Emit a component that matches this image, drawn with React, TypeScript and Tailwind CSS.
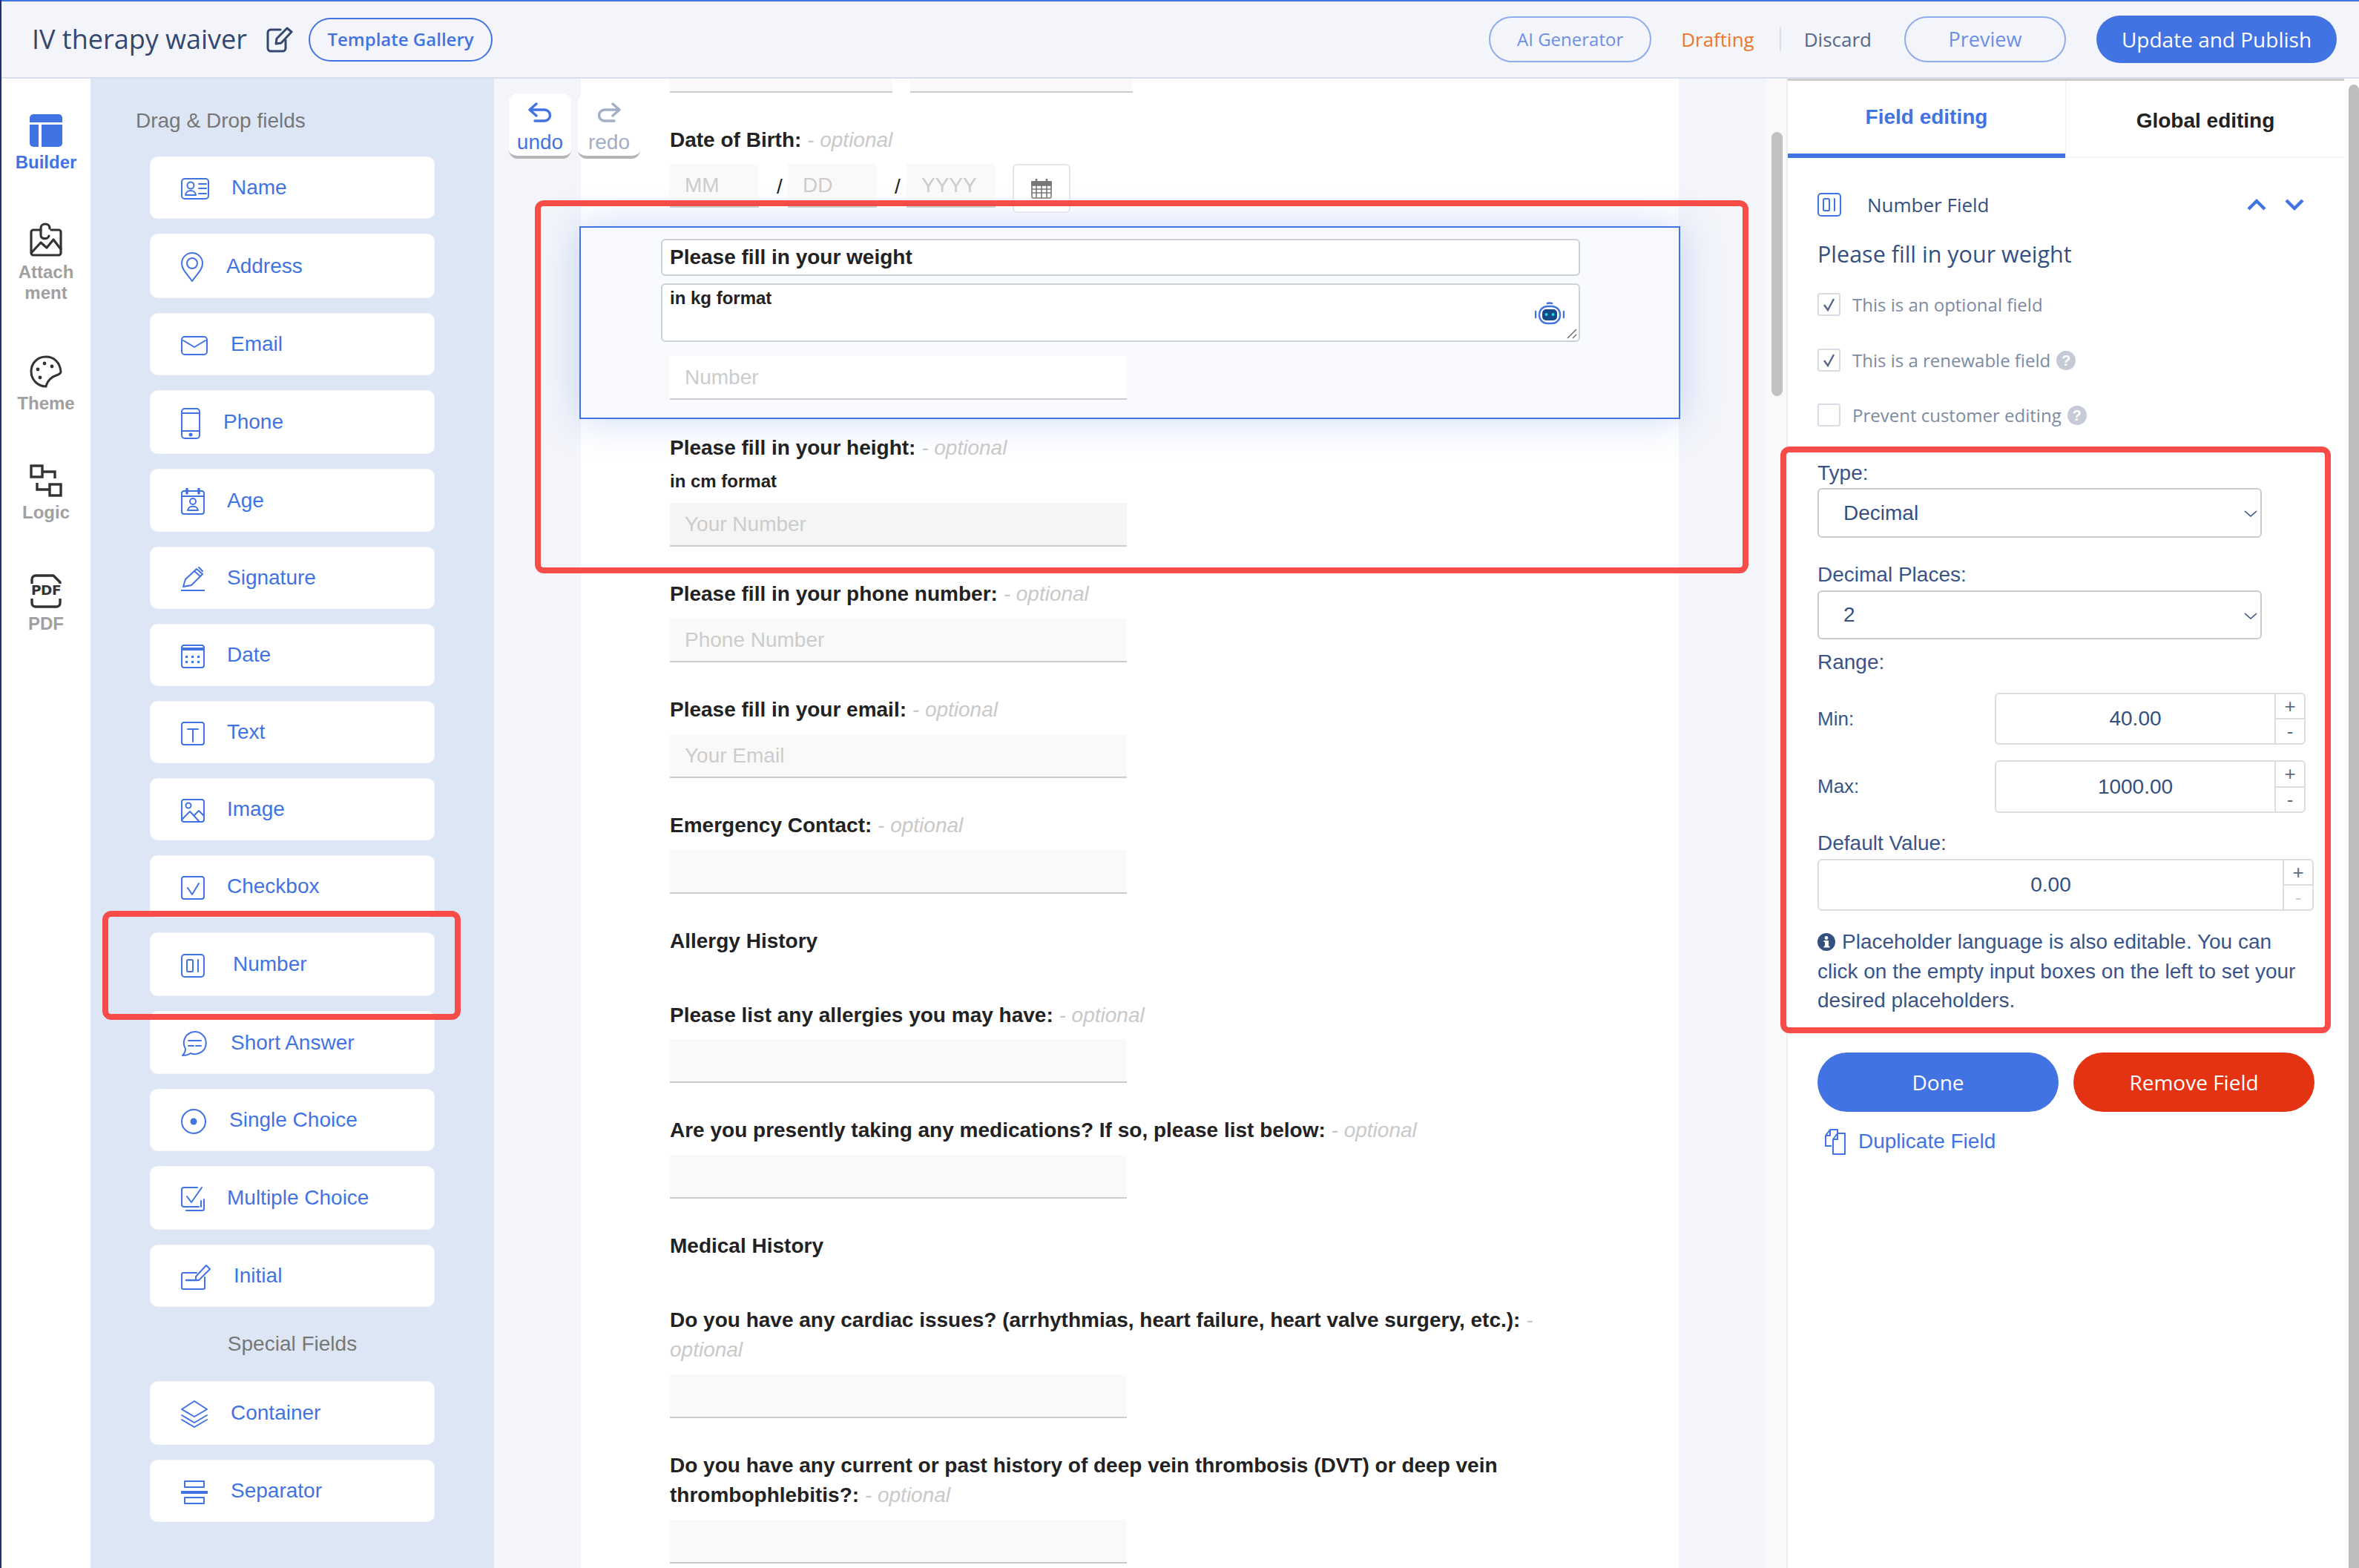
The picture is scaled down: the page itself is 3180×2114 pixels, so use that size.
import React from "react";

const S = ({ w, h, vb, children, className = "" }: { w: number; h: number; vb: string; children: React.ReactNode; className?: string }) => (
    <svg width={w} height={h} viewBox={vb} fill="none" stroke="currentColor" strokeWidth="2" strokeLinecap="round" strokeLinejoin="round" className={className}>
        {children}
    </svg>
);

const fieldIcons: Record<string, React.ReactNode> = {
    id: (
        <S w={38} h={29} vb="0 0 38 29">
            <rect x="1" y="1" width="36" height="27" rx="4" />
            <circle cx="13" cy="10" r="4.5" />
            <path d="M6 23c1-8 13-8 14 0z" />
            <path d="M24 8h10M24 14h10M24 21h10" />
        </S>
    ),
    pin: (
        <S w={30} h={40} vb="0 0 30 40">
            <path d="M15 39C9 30 1 24 1 15a14 14 0 0 1 28 0c0 9-8 15-14 24z" />
            <circle cx="15" cy="15" r="7" />
        </S>
    ),
    mail: (
        <S w={36} h={26} vb="0 0 36 26">
            <rect x="1" y="1" width="34" height="24" rx="4" />
            <path d="M3 6l15 9 15-9" />
        </S>
    ),
    phone: (
        <S w={26} h={42} vb="0 0 26 42">
            <rect x="1" y="1" width="24" height="40" rx="4" />
            <path d="M1 7h24M1 31h24" />
            <circle cx="13" cy="36" r="2.5" fill="currentColor" stroke="none" />
        </S>
    ),
    age: (
        <S w={32} h={36} vb="0 0 32 36">
            <rect x="1" y="4" width="30" height="31" rx="3" />
            <path d="M1 11h30" />
            <path d="M8 1v6M24 1v6" strokeWidth="3.5" />
            <circle cx="16" cy="18" r="4" />
            <path d="M9 30c1-7 13-7 14 0z" />
        </S>
    ),
    signature: (
        <S w={32} h={33} vb="0 0 32 33">
            <path d="M3 27l3-10L21 3l8 7-15 15z" />
            <path d="M18 6l8 7M24 1l5 5" />
            <path d="M0 32h32" />
        </S>
    ),
    date: (
        <S w={32} h={32} vb="0 0 32 32">
            <rect x="1" y="1" width="30" height="30" rx="3" />
            <rect x="1" y="4" width="30" height="4" fill="currentColor" stroke="none" />
            <path d="M6 15h3v3H6zM14 15h3v3h-3zM22 15h3v3h-3zM6 22h3v3H6zM14 22h3v3h-3zM22 22h3v3h-3z" fill="currentColor" stroke="none" />
        </S>
    ),
    text: (
        <S w={32} h={32} vb="0 0 32 32">
            <rect x="1" y="1" width="30" height="30" rx="3" />
            <path d="M9 10h14M16 10v17" />
        </S>
    ),
    image: (
        <S w={32} h={32} vb="0 0 32 32">
            <rect x="1" y="1" width="30" height="30" rx="3" />
            <circle cx="10" cy="9" r="3.5" />
            <path d="M1 28l11-11 13 14M18 22l6-6 7 7" />
        </S>
    ),
    checkbox: (
        <S w={32} h={32} vb="0 0 32 32">
            <rect x="1" y="1" width="30" height="30" rx="3" />
            <path d="M9 16l6 9 9-15" />
        </S>
    ),
    number: (
        <S w={32} h={32} vb="0 0 32 32">
            <rect x="1" y="1" width="30" height="30" rx="4" />
            <rect x="8" y="8" width="8" height="16" rx="1.5" />
            <path d="M23 8v16" />
        </S>
    ),
    short: (
        <S w={36} h={34} vb="0 0 36 34">
            <path d="M6 24A15 15 0 1 1 13 30C9 33 5 33 2 33C4 31 6 28 6 24z" />
            <path d="M10 13h17M10 20h7M20 20h7" />
        </S>
    ),
    single: (
        <S w={34} h={34} vb="0 0 34 34">
            <circle cx="17" cy="17" r="16" />
            <circle cx="17" cy="17" r="4.5" fill="currentColor" stroke="none" />
        </S>
    ),
    multiple: (
        <S w={32} h={33} vb="0 0 32 33">
            <path d="M22 1H4a3 3 0 0 0-3 3v20a3 3 0 0 0 3 3h20" />
            <path d="M8 13l6 8 14-20" />
            <path d="M31 17v13a2 2 0 0 1-2 2H7" />
            <path d="M27 19v8" />
        </S>
    ),
    initial: (
        <S w={40} h={34} vb="0 0 40 34">
            <path d="M32 17v14a2 2 0 0 1-2 2H3a2 2 0 0 1-2-2V13a2 2 0 0 1 2-2h18" />
            <path d="M7 21h15" strokeWidth="2.5" />
            <path d="M20 21v-5L34 1l5 5-15 15z" />
        </S>
    ),
    container: (
        <S w={36} h={37} vb="0 0 36 37">
            <path d="M18 1l17 11-17 10L1 12z" />
            <path d="M1 20l17 10 17-10" />
            <path d="M1 26l17 10 17-10" />
        </S>
    ),
    separator: (
        <S w={36} h={32} vb="0 0 36 32">
            <rect x="5" y="1" width="26" height="8" />
            <rect x="5" y="23" width="26" height="8" />
            <path d="M0 16h36" strokeWidth="4" strokeLinecap="butt" />
        </S>
    ),
};

const fields = [
    { name: "Name", icon: "id", h: "h-[84px]", slot: "w-[68px]" },
    { name: "Address", icon: "pin", h: "h-[87px]", slot: "w-[61px]" },
    { name: "Email", icon: "mail", h: "h-[84px]", slot: "w-[67px]" },
    { name: "Phone", icon: "phone", h: "h-[86px]", slot: "w-[57px]" },
    { name: "Age", icon: "age", h: "h-[85px]", slot: "w-[62px]" },
    { name: "Signature", icon: "signature", h: "h-[84px]", slot: "w-[62px]" },
    { name: "Date", icon: "date", h: "h-[84px]", slot: "w-[62px]" },
    { name: "Text", icon: "text", h: "h-[84px]", slot: "w-[62px]" },
    { name: "Image", icon: "image", h: "h-[84px]", slot: "w-[62px]" },
    { name: "Checkbox", icon: "checkbox", h: "h-[84px]", slot: "w-[62px]" },
    { name: "Number", icon: "number", h: "h-[86px]", slot: "w-[70px]" },
    { name: "Short Answer", icon: "short", h: "h-[85px]", slot: "w-[67px]" },
    { name: "Single Choice", icon: "single", h: "h-[84px]", slot: "w-[65px]" },
    { name: "Multiple Choice", icon: "multiple", h: "h-[86px]", slot: "w-[62px]" },
    { name: "Initial", icon: "initial", h: "h-[84px]", slot: "w-[71px]" },
];

const specialFields = [
    { name: "Container", icon: "container", h: "h-[86px]", slot: "w-[67px]" },
    { name: "Separator", icon: "separator", h: "h-[84px]", slot: "w-[67px]" },
];

const FieldCard = ({ f }: { f: { name: string; icon: string; h: string; slot: string } }) => (
    <div className={`flex w-[384px] items-center rounded-[10px] border border-[#f5f7fc] bg-white pl-[41px] text-[28px] text-[#4273e2] ${f.h}`}>
        <div className={`mt-[3px] flex shrink-0 items-center ${f.slot}`}>{fieldIcons[f.icon]}</div>
        <span>{f.name}</span>
    </div>
);

const BuilderIcon = () => (
    <svg width="44" height="44" viewBox="0 0 44 44" className="text-[#4273e2]">
        <path d="M5 0h34a5 5 0 0 1 5 5v6H0V5a5 5 0 0 1 5-5z" fill="currentColor" />
        <path d="M0 14h12v30H5a5 5 0 0 1-5-5z" fill="currentColor" />
        <path d="M16 14h28v25a5 5 0 0 1-5 5H16z" fill="currentColor" />
    </svg>
);

const AttachIcon = () => (
    <svg width="44" height="46" viewBox="0 0 44 46" fill="none" stroke="#333" strokeWidth="3.2" strokeLinejoin="round" strokeLinecap="round">
        <path d="M15 10H5a3 3 0 0 0-3 3v28a3 3 0 0 0 3 3h34a3 3 0 0 0 3-3V13a3 3 0 0 0-3-3H29" />
        <path d="M27 8c0-8-12-8-12 0v9c0 6 10 6 11 1" />
        <path d="M3 40l12-13 8 7 9-11 10 13" />
    </svg>
);

const ThemeIcon = () => (
    <svg width="44" height="44" viewBox="0 0 44 44" fill="none" stroke="#333" strokeWidth="3">
        <path d="M42 22C41 10 33 2 22 2 10 2 2 11 2 22s9 20 20 20c2-8 8-13 14-15 3-1 6-2 6-5z" />
        <circle cx="20" cy="11" r="2.4" fill="#333" stroke="none" />
        <circle cx="30" cy="15" r="2.4" fill="#333" stroke="none" />
        <circle cx="11" cy="19" r="2.4" fill="#333" stroke="none" />
        <circle cx="14" cy="30" r="2.4" fill="#333" stroke="none" />
    </svg>
);

const LogicIcon = () => (
    <svg width="44" height="44" viewBox="0 0 44 44" fill="none" stroke="#333" strokeWidth="3.4">
        <rect x="2" y="2" width="15" height="15" />
        <rect x="27" y="27" width="15" height="15" />
        <path d="M17 10h17v9M27 34H10v-9" />
    </svg>
);

const PdfIcon = () => (
    <div className="relative h-[46px] w-[42px]">
        <svg width="42" height="46" viewBox="0 0 42 46" fill="none" stroke="#333" strokeWidth="3.4" strokeLinejoin="round">
            <path d="M2 13V7a5 5 0 0 1 5-5h24l9 9v2" />
            <path d="M2 33v6a5 5 0 0 0 5 5h28a5 5 0 0 0 5-5v-6" />
        </svg>
        <span className="absolute left-0 top-[9px] w-[42px] text-center font-['DejaVu_Sans',sans-serif] text-[18.5px] leading-[26px] font-bold tracking-[-0.5px] text-[#333]">
            PDF
        </span>
    </div>
);

const navItems = [
    { label: ["Builder"], icon: <BuilderIcon />, mt: "mt-[48px]", active: true },
    { label: ["Attach", "ment"], icon: <AttachIcon />, mt: "mt-[67px]", active: false },
    { label: ["Theme"], icon: <ThemeIcon />, mt: "mt-[70px]", active: false },
    { label: ["Logic"], icon: <LogicIcon />, mt: "mt-[68px]", active: false },
    { label: ["PDF"], icon: <PdfIcon />, mt: "mt-[69px]", active: false },
];

const NavRail = () => (
    <div className="flex h-full w-[120px] shrink-0 flex-col items-center bg-white">
        {navItems.map((n) => (
            <div key={n.label[0]} className={`flex flex-col items-center ${n.mt}`}>
                {n.icon}
                <div className={`mt-[7px] text-center text-[24px] leading-[28px] font-bold ${n.active ? "text-[#4273e2]" : "text-[#a0a0a0]"}`}>
                    {n.label.map((l) => (
                        <div key={l}>{l}</div>
                    ))}
                </div>
            </div>
        ))}
    </div>
);

const FieldsPanel = () => (
    <div className="flex h-full w-[544px] shrink-0 flex-col items-start bg-[#dde6f5] pl-[80px]">
        <div className="mt-[40px] mb-[31px] -ml-[19px] text-[28px] leading-[34px] text-[#777]">Drag &amp; Drop fields</div>
        <div className="flex flex-col gap-[20px]">
            {fields.map((f) => (
                <FieldCard key={f.name} f={f} />
            ))}
            <div className="flex h-[60px] w-[384px] items-center justify-center text-[28px] text-[#777]">Special Fields</div>
            {specialFields.map((f) => (
                <FieldCard key={f.name} f={f} />
            ))}
        </div>
    </div>
);

const Optional = () => <span className="font-normal text-[#c9c9c9] italic"> - optional</span>;

const Input = ({ text, bg = "bg-[#f9f9f9]", className = "w-[616px]" }: { text?: string; bg?: string; className?: string }) => (
    <div className={`flex h-[59px] items-center border-b-2 border-[#ccc] pl-[20px] text-[28px] text-[#ccc] ${bg} ${className}`}>{text}</div>
);

const Field = ({ label, placeholder, hint, top = "mt-[44px]", gap = "mt-[13px]", bg }: { label: string; placeholder?: string; hint?: string; top?: string; gap?: string; bg?: string }) => (
    <div className={top}>
        <div className="max-w-[1240px] text-[28px] leading-[40px] font-bold text-[#222]">
            {label}
            <Optional />
        </div>
        {hint && <div className="mt-[5px] text-[24px] leading-[40px] font-bold text-[#222]">{hint}</div>}
        <div className={gap}>
            <Input text={placeholder} bg={bg} />
        </div>
    </div>
);

const SectionTitle = ({ title }: { title: string }) => <div className="mt-[44px] text-[28px] leading-[40px] font-bold text-[#222]">{title}</div>;

const CalendarIcon = () => (
    <svg width="28" height="28" viewBox="0 0 28 28" fill="none" stroke="#777" strokeWidth="1.6">
        <rect x="1" y="5" width="26" height="22" rx="1.5" fill="#fff" />
        <rect x="1" y="5" width="26" height="5" fill="#777" />
        <path d="M1 15h26M1 20h26M7 10v17M14 10v17M21 10v17" />
        <path d="M7 1v6M21 1v6" strokeWidth="2.4" />
    </svg>
);

const RobotIcon = () => (
    <svg width="40" height="32" viewBox="0 0 40 32" className="absolute top-[22px] right-[19px]">
        <path d="M16 3.5c2-1.5 6-1.5 8 0" stroke="#4273e2" strokeWidth="2.5" fill="none" />
        <rect x="6" y="7" width="28" height="23" rx="11" stroke="#4273e2" strokeWidth="2.4" fill="#fff" />
        <rect x="10" y="11" width="20" height="15" rx="5" fill="#164a86" />
        <circle cx="15.5" cy="18" r="1.9" fill="#1fe0e8" />
        <circle cx="24.5" cy="18" r="1.9" fill="#1fe0e8" />
        <path d="M1 13v10M39 13v10" stroke="#4273e2" strokeWidth="2.4" />
    </svg>
);

const FormCanvas = () => (
    <div className="h-full w-[1480px] shrink-0 bg-white pl-[120px]">
        <div className="flex gap-[24px]">
            <div className="h-[19px] w-[300px] border-b-2 border-[#ccc] bg-[#f9f9f9]" />
            <div className="h-[19px] w-[300px] border-b-2 border-[#ccc] bg-[#f9f9f9]" />
        </div>
        <div className="mt-[44px] text-[28px] leading-[40px] font-bold text-[#222]">
            Date of Birth:
            <Optional />
        </div>
        <div className="mt-[12px] flex h-[59px] items-start">
            <Input text="MM" className="w-[120px]" />
            <span className="w-[39px] pt-[10px] pl-[24px] text-[28px] text-[#222]">/</span>
            <Input text="DD" className="w-[120px]" />
            <span className="w-[40px] pt-[10px] pl-[24px] text-[28px] text-[#222]">/</span>
            <Input text="YYYY" className="w-[120px]" />
            <div className="ml-[23px] flex h-[66px] w-[78px] shrink-0 items-center justify-center rounded-[6px] border-2 border-[#e4e6ea] bg-white">
                <CalendarIcon />
            </div>
        </div>
        <div className="mt-[25px] -ml-[122px] h-[260px] w-[1484px] border-2 border-[#4273e2] bg-[#f9fafe] pt-[15px] pl-[108px] shadow-[0_0_50px_rgba(66,115,226,0.28)]">
            <div className="flex h-[50px] w-[1239px] items-center rounded-[6px] border-2 border-[#ccd0d8] bg-white pl-[10px] text-[28px] font-bold text-[#222]">Please fill in your weight</div>
            <div className="relative mt-[10px] h-[79px] w-[1239px] rounded-[6px] border-2 border-[#ccd0d8] bg-white pt-[3px] pl-[10px] text-[24px] leading-[30px] font-bold text-[#222]">
                in kg format
                <RobotIcon />
                <svg width="14" height="14" viewBox="0 0 14 14" className="absolute right-[2px] bottom-[2px]" stroke="#666" strokeWidth="1.4">
                    <path d="M1 13L13 1M8 13l5-5" />
                </svg>
            </div>
            <div className="mt-[19px] ml-[12px]">
                <Input text="Number" bg="bg-white" />
            </div>
        </div>
        <Field label="Please fill in your height:" hint="in cm format" placeholder="Your Number" top="mt-[19px]" gap="mt-[9px]" bg="bg-[#f5f5f5]" />
        <Field label="Please fill in your phone number:" placeholder="Phone Number" />
        <Field label="Please fill in your email:" placeholder="Your Email" />
        <Field label="Emergency Contact:" />
        <SectionTitle title="Allergy History" />
        <Field label="Please list any allergies you may have:" top="mt-[60px]" gap="mt-[12px]" />
        <Field label="Are you presently taking any medications? If so, please list below:" />
        <SectionTitle title="Medical History" />
        <Field label="Do you have any cardiac issues? (arrhythmias, heart failure, heart valve surgery, etc.):" top="mt-[60px]" />
        <Field label="Do you have any current or past history of deep vein thrombosis (DVT) or deep vein thrombophlebitis?:" />
    </div>
);

const Chevron = () => (
    <svg width="20" height="12" viewBox="0 0 20 12" fill="none" stroke="#34507f" strokeWidth="1.6" className="absolute right-[3px] top-[27px]">
        <path d="M2 2l8 7 8-7" />
    </svg>
);

const Select = ({ value, height }: { value: string; height: string }) => (
    <div className={`relative flex w-[599px] items-center rounded-[6px] border-2 border-[#ccc] bg-white pl-[33px] text-[28px] text-[#34507f] ${height}`}>
        {value}
        <Chevron />
    </div>
);

const Stepper = ({ value, width, height, minusOff = false }: { value: string; width: string; height: string; minusOff?: boolean }) => (
    <div className={`flex rounded-[6px] border-2 border-[#ddd] bg-white text-[#34507f] ${width} ${height}`}>
        <div className="flex flex-1 items-center justify-center text-[28px]">{value}</div>
        <div className="flex w-[40px] flex-col border-l-2 border-[#ddd] text-center text-[26px] leading-[32px]">
            <div className="flex-1 border-b-2 border-[#ddd] text-[#5a6a80]">+</div>
            <div className={`flex-1 ${minusOff ? "text-[#c9ced6]" : "text-[#5a6a80]"}`}>-</div>
        </div>
    </div>
);

const Check = ({ checked, label, help, top }: { checked: boolean; label: string; help?: boolean; top: string }) => (
    <div className={`flex h-[31px] items-center ${top}`}>
        <div className="flex h-[31px] w-[31px] items-center justify-center rounded-[3px] border-2 border-[#d8dce3] bg-white">
            {checked && (
                <svg width="20" height="20" viewBox="0 0 20 20" fill="none" stroke="#55678a" strokeWidth="2.4">
                    <path d="M3 10l5 7 8-15" />
                </svg>
            )}
        </div>
        <span className="ml-[16px] font-['Open_Sans',sans-serif] text-[24px] text-[#7c8aa3]">{label}</span>
        {help && <span className="ml-[8px] flex h-[26px] w-[26px] items-center justify-center rounded-full bg-[#c4cad6] text-[20px] font-bold text-white">?</span>}
    </div>
);

const EditorPanel = () => (
    <div className="h-full w-[750px] shrink-0 border-t-[3px] border-[#ccc] bg-white">
        <div className="flex h-[104px]">
            <div className="flex w-[374px] items-center justify-center border-b-[6px] border-[#4273e2] text-[28px] font-bold text-[#4273e2]">Field editing</div>
            <div className="flex flex-1 items-center justify-center border-b-2 border-l-2 border-[#f5f5f5] pt-[6px] text-[28px] font-bold text-[#222]">Global editing</div>
        </div>
        <div className="pl-[40px]">
            <div className="mt-[47px] flex h-[32px] items-center text-[#4273e2]">
                {fieldIcons.number}
                <span className="ml-[35px] font-['Open_Sans',sans-serif] text-[26px] text-[#34507f]">Number Field</span>
                <svg width="77" height="18" viewBox="0 0 77 18" fill="none" stroke="#4273e2" strokeWidth="4.4" className="ml-[347px]">
                    <path d="M2 15l11-11 11 11M53 3l11 11 11-11" />
                </svg>
            </div>
            <div className="mt-[30px] font-['Open_Sans',sans-serif] text-[30.5px] leading-[40px] text-[#34507f]">Please fill in your weight</div>
            <Check checked label="This is an optional field" top="mt-[33px]" />
            <Check checked label="This is a renewable field" help top="mt-[44px]" />
            <Check checked={false} label="Prevent customer editing" help top="mt-[43px]" />

            <div className="mt-[46px] text-[28px] leading-[34px] text-[#3a5488]">Type:</div>
            <div className="mt-[3px]">
                <Select value="Decimal" height="h-[67px]" />
            </div>
            <div className="mt-[33px] text-[28px] leading-[34px] text-[#3a5488]">Decimal Places:</div>
            <div className="mt-[4px]">
                <Select value="2" height="h-[66px]" />
            </div>
            <div className="mt-[14px] text-[28px] leading-[34px] text-[#3a5488]">Range:</div>
            <div className="mt-[24px] flex items-center">
                <span className="w-[239px] text-[26px] text-[#3a5488]">Min:</span>
                <Stepper value="40.00" width="w-[419px]" height="h-[70px]" />
            </div>
            <div className="mt-[21px] flex items-center">
                <span className="w-[239px] text-[26px] text-[#3a5488]">Max:</span>
                <Stepper value="1000.00" width="w-[419px]" height="h-[71px]" />
            </div>
            <div className="mt-[24px] text-[28px] leading-[34px] text-[#3a5488]">Default Value:</div>
            <div className="mt-[4px]">
                <Stepper value="0.00" width="w-[669px]" height="h-[70px]" minusOff />
            </div>
            <div className="mt-[22px] w-[660px] text-[28px] leading-[39.5px] text-[#3a5488]">
                <svg width="24" height="24" viewBox="0 0 24 24" className="mr-[9px] inline-block align-[-3px]">
                    <circle cx="12" cy="12" r="12" fill="#34507f" />
                    <rect x="10" y="10" width="5" height="9" fill="#fff" />
                    <rect x="8.5" y="17.5" width="8" height="2" fill="#fff" />
                    <rect x="8.5" y="10" width="5" height="2" fill="#fff" />
                    <circle cx="12" cy="6.5" r="2.4" fill="#fff" />
                </svg>
                Placeholder language is also editable. You can click on the empty input boxes on the left to set your desired placeholders.
            </div>
            <div className="mt-[50px] flex gap-[20px] font-['Open_Sans',sans-serif] text-[28px] text-white">
                <div className="flex h-[80px] w-[325px] items-center justify-center rounded-full bg-[#4273e2]">Done</div>
                <div className="flex h-[80px] w-[325px] items-center justify-center rounded-full bg-[#e43313]">Remove Field</div>
            </div>
            <div className="mt-[20px] flex h-[40px] items-center pl-[10px] text-[28px] text-[#4273e2]">
                <svg width="28" height="36" viewBox="0 0 28 36" fill="none" stroke="currentColor" strokeWidth="2" strokeLinejoin="round">
                    <path d="M17 7V2H7L1 10v14h8" />
                    <path d="M17 7h10v28H11V15z" fill="#fff" />
                    <path d="M7 2v8H1M17 7v8h-6" />
                </svg>
                <span className="ml-[17px]">Duplicate Field</span>
            </div>
        </div>
    </div>
);

const HeaderBar = () => (
    <div className="flex h-[106px] items-center border-t-2 border-b-2 border-t-[#4273e2] border-b-[#d8deea] bg-[#f3f5fa] pl-[41px] font-['Open_Sans',sans-serif]">
        <span className="text-[36px] text-[#33486f]">IV therapy waiver</span>
        <svg width="36" height="36" viewBox="0 0 36 36" fill="none" stroke="#33486f" strokeWidth="3" strokeLinecap="round" strokeLinejoin="round" className="ml-[26px]">
            <path d="M26 19v11a4 4 0 0 1-4 4H6a4 4 0 0 1-4-4V9a4 4 0 0 1 4-4h13" />
            <path d="M13 24l1-7L28 3l6 5-14 15z" />
        </svg>
        <div className="ml-[21px] flex h-[59px] w-[248px] items-center justify-center rounded-full border-2 border-[#4273e2] text-[24px] font-semibold text-[#4273e2]">Template Gallery</div>
        <div className="ml-auto flex items-center pr-[30px]">
            <div className="flex h-[62px] w-[219px] items-center justify-center rounded-full border-2 border-[#8facec] text-[24px] text-[#6c8fe6]">AI Generator</div>
            <span className="ml-[40px] text-[26px] text-[#f0762b]">Drafting</span>
            <span className="ml-[34px] h-[32px] w-[2px] bg-[#dde0e8]" />
            <span className="ml-[31px] text-[26px] text-[#55678a]">Discard</span>
            <div className="ml-[44px] flex h-[62px] w-[218px] items-center justify-center rounded-full border-2 border-[#8facec] text-[27px] text-[#6c8fe6]">Preview</div>
            <div className="ml-[41px] flex h-[64px] w-[324px] items-center justify-center rounded-full bg-[#4273e2] text-[28px] text-white">Update and Publish</div>
        </div>
    </div>
);

const HistoryButton = ({ label, active, left }: { label: string; active: boolean; left: string }) => (
    <div className={`absolute top-[126px] flex h-[88px] w-[84px] flex-col items-center rounded-[12px] border-b-[4px] border-[#b5b5b5] bg-white pt-[12px] ${left} ${active ? "text-[#4273e2]" : "text-[#a2adc6]"}`}>
        <svg width="32" height="28" viewBox="0 0 32 28" fill="none" stroke="currentColor" strokeWidth="3.4" strokeLinecap="round" strokeLinejoin="round" className={active ? "" : "-scale-x-100"}>
            <path d="M11 2L2 10l9 8" />
            <path d="M3 10h19a7 7 0 0 1 0 15H9" />
        </svg>
        <span className="mt-[11px] text-[28px] leading-[30px]">{label}</span>
    </div>
);

export default function App() {
    return (
        <div className="relative h-[2114px] w-[3180px] overflow-hidden border-l-2 border-[#1f2f7a] bg-[#f3f5fa] font-['Liberation_Sans',Arial,sans-serif]">
            <HeaderBar />
            <div className="flex h-[2008px]">
                <NavRail />
                <FieldsPanel />
                <div className="h-full w-[117px] shrink-0" />
                <FormCanvas />
                <div className="h-full w-[117px] shrink-0" />
                <div className="h-full w-[30px] shrink-0 border-r-2 border-[#eee] bg-[#f9f9f9] pt-[72px] pl-[8px]">
                    <div className="h-[356px] w-[15px] rounded-full bg-[#c2c2c2]" />
                </div>
                <EditorPanel />
                <div className="h-full w-[20px] shrink-0 bg-white pt-[8px] pl-[6px]">
                    <div className="h-full w-[14px] rounded-t-full bg-[#bdbdbd]" />
                </div>
            </div>
            <HistoryButton label="undo" active left="left-[684px]" />
            <HistoryButton label="redo" active={false} left="left-[777px]" />
            {/* annotation boxes from the reference */}
            <div className="absolute top-[270px] left-[719px] h-[503px] w-[1636px] rounded-[12px] border-[8px] border-[#f84c48]" />
            <div className="absolute top-[1228px] left-[136px] h-[147px] w-[483px] rounded-[12px] border-[8px] border-[#f84c48]" />
            <div className="absolute top-[602px] left-[2398px] h-[791px] w-[742px] rounded-[12px] border-[8px] border-[#f84c48]" />
        </div>
    );
}
